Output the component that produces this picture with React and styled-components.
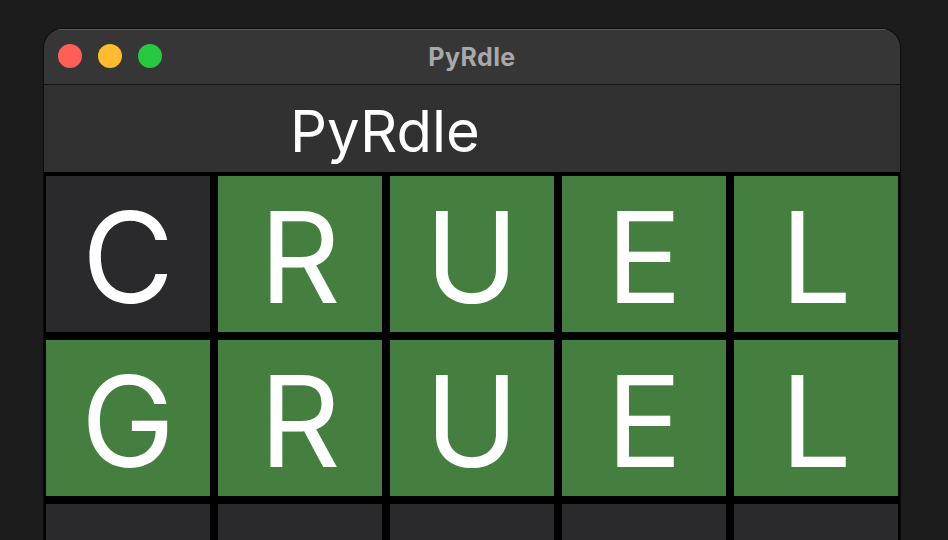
import React from "react";
import styled, { createGlobalStyle } from "styled-components";

const GlobalStyle = createGlobalStyle`
  html, body {
    margin: 0;
    padding: 0;
    height: 100%;
    overflow: hidden;
    background: #1c1c1c;
  }
  body {
    font-family: Inter, "Noto Sans", sans-serif;
  }
`;

const guesses = [
  [
    { letter: "C", state: "miss" },
    { letter: "R", state: "hit" },
    { letter: "U", state: "hit" },
    { letter: "E", state: "hit" },
    { letter: "L", state: "hit" },
  ],
  [
    { letter: "G", state: "hit" },
    { letter: "R", state: "hit" },
    { letter: "U", state: "hit" },
    { letter: "E", state: "hit" },
    { letter: "L", state: "hit" },
  ],
];

const TOTAL_ROWS = 6;

const App = () => {
  const rows = [];
  for (let r = 0; r < TOTAL_ROWS; r++) {
    const guess = guesses[r] || Array(5).fill({ letter: "", state: "empty" });
    guess.forEach((cell, c) => {
      rows.push(
        <Tile key={`${r}-${c}`} $state={cell.state}>
          {cell.letter}
        </Tile>
      );
    });
  }

  return (
    <>
      <GlobalStyle />
      <Window>
        <TitleBar>
          <Lights>
            <Light $color="#ff5f57" />
            <Light $color="#febc2e" />
            <Light $color="#28c840" />
          </Lights>
          <WindowTitle>PyRdle</WindowTitle>
        </TitleBar>
        <Header>
          <Heading>PyRdle</Heading>
        </Header>
        <Board>{rows}</Board>
      </Window>
    </>
  );
};

const Window = styled.div`
  margin: 28px 0 0 43px;
  width: 856px;
  height: 560px;
  border: 1px solid #0c0c0c;
  border-bottom: none;
  border-radius: 20px 20px 0 0;
  background: #313131;
  overflow: hidden;
  display: flex;
  flex-direction: column;
`;

const TitleBar = styled.div`
  position: relative;
  height: 55px;
  flex-shrink: 0;
  background: #363636;
  box-shadow: inset 0 1px 0 #5e5e5e;
  border-bottom: 1px solid #141414;
  display: flex;
  align-items: center;
  justify-content: center;
`;

const Lights = styled.div`
  position: absolute;
  left: 14px;
  top: 15px;
  display: flex;
  gap: 16px;
`;

const Light = styled.span`
  width: 24px;
  height: 24px;
  border-radius: 50%;
  background: ${(p) => p.$color};
`;

const WindowTitle = styled.div`
  color: #a8a8a8;
  font-size: 25px;
  font-weight: 700;
  letter-spacing: 0.4px;
  margin-top: 1px;
`;

const Header = styled.div`
  height: 87px;
  flex-shrink: 0;
  background: #313131;
  display: flex;
  align-items: center;
  padding-left: 246px;
`;

const Heading = styled.div`
  color: #ffffff;
  font-size: 58px;
  font-weight: 400;
  line-height: 1;
  margin-top: 4px;
`;

const Board = styled.div`
  flex: 1;
  background: #000;
  padding: 4px 2px;
  display: grid;
  grid-template-columns: repeat(5, 164px);
  grid-auto-rows: 156px;
  gap: 8px;
`;

const tileColors = {
  hit: "#447f3f",
  miss: "#2a2a2c",
  empty: "#2a2a2c",
};

const Tile = styled.div`
  background: ${(p) => tileColors[p.$state]};
  color: #ffffff;
  font-size: 126px;
  font-weight: 400;
  line-height: 1;
  display: flex;
  align-items: center;
  justify-content: center;
  padding-top: 6px;
  box-sizing: border-box;
`;

export default App;
